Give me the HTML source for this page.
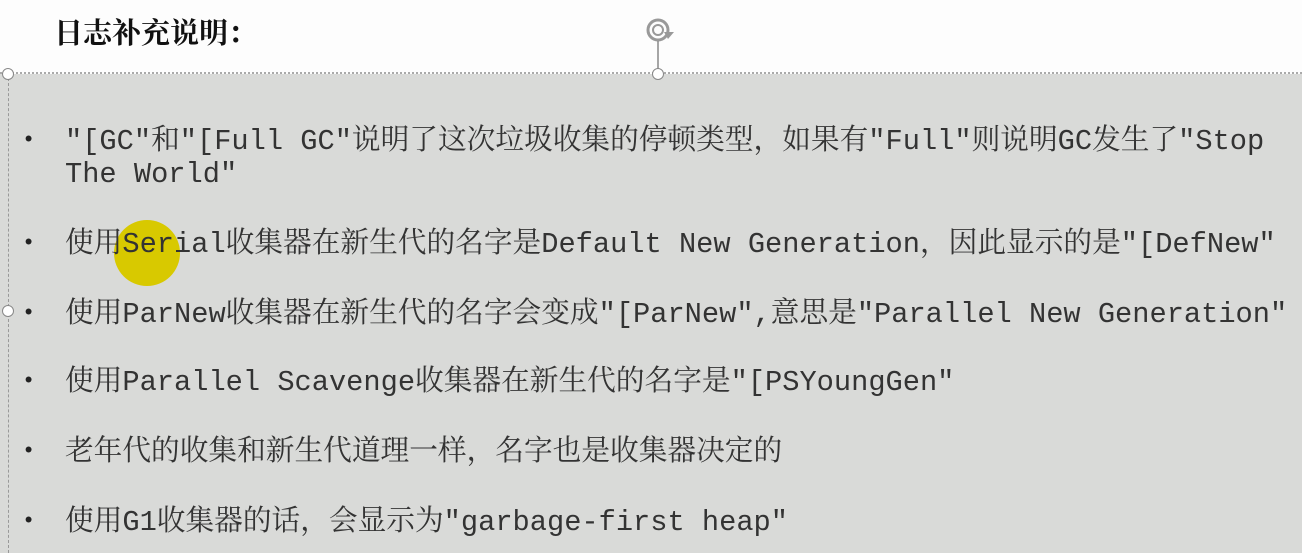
<!DOCTYPE html>
<html><head><meta charset="utf-8"><style>
html,body{margin:0;padding:0}
body{width:1302px;height:546px;overflow:hidden;position:relative;background:#d9dad8;font-family:"Liberation Mono","Noto Serif CJK SC",monospace;color:#333}
.top{position:absolute;left:0;top:0;width:1302px;height:74px;background:#fdfdfd;border-bottom:2px dotted #aaa;box-sizing:border-box}
.title{position:absolute;left:54px;top:12px;font-family:"Noto Serif CJK SC",serif;font-weight:bold;font-size:29px;line-height:40px;color:#111}
.vline{position:absolute;left:8px;top:73px;height:480px;border-left:1px dashed #999}
.h{position:absolute;width:12px;height:12px;border:1.5px solid #888;border-radius:50%;background:#fff;box-sizing:border-box}
.line{position:absolute;left:65px;font-size:28.7px;line-height:34px;white-space:nowrap}
.b{position:absolute;left:22px;font-size:22px;line-height:34px;color:#222}
</style></head><body>
<div class="top"></div>
<div class="title">日志补充说明：</div>
<div class="vline"></div>
<svg style="position:absolute;left:640px;top:12px" width="40" height="64">
<circle cx="18" cy="18" r="10" fill="none" stroke="#999" stroke-width="3"/>
<circle cx="18" cy="18" r="5" fill="none" stroke="#999" stroke-width="2"/>
<path d="M24 20 L34 20 L28 27 Z" fill="#999"/>
<line x1="18" y1="29" x2="18" y2="60" stroke="#888" stroke-width="1.5"/>
</svg>
<div class="h" style="left:2px;top:68px"></div>
<div class="h" style="left:652px;top:68px"></div>
<div class="h" style="left:2px;top:305px"></div>
<div style="position:absolute;left:114px;top:220px;width:66px;height:66px;border-radius:50%;background:#d8c900"></div>
<div class="b" style="top:124px">•</div>
<div class="line" style="top:125px">"[GC"和"[Full GC"说明了这次垃圾收集的停顿类型，如果有"Full"则说明GC发生了"Stop</div>
<div class="line" style="top:158px">The World"</div>
<div class="b" style="top:227px">•</div>
<div class="line" style="top:228px">使用Serial收集器在新生代的名字是Default New Generation，因此显示的是"[DefNew"</div>
<div class="b" style="top:297px">•</div>
<div class="line" style="top:298px">使用ParNew收集器在新生代的名字会变成"[ParNew",意思是"Parallel New Generation"</div>
<div class="b" style="top:365px">•</div>
<div class="line" style="top:366px">使用Parallel Scavenge收集器在新生代的名字是"[PSYoungGen"</div>
<div class="b" style="top:435px">•</div>
<div class="line" style="top:436px">老年代的收集和新生代道理一样，名字也是收集器决定的</div>
<div class="b" style="top:505px">•</div>
<div class="line" style="top:506px">使用G1收集器的话，会显示为"garbage-first heap"</div>
</body></html>
